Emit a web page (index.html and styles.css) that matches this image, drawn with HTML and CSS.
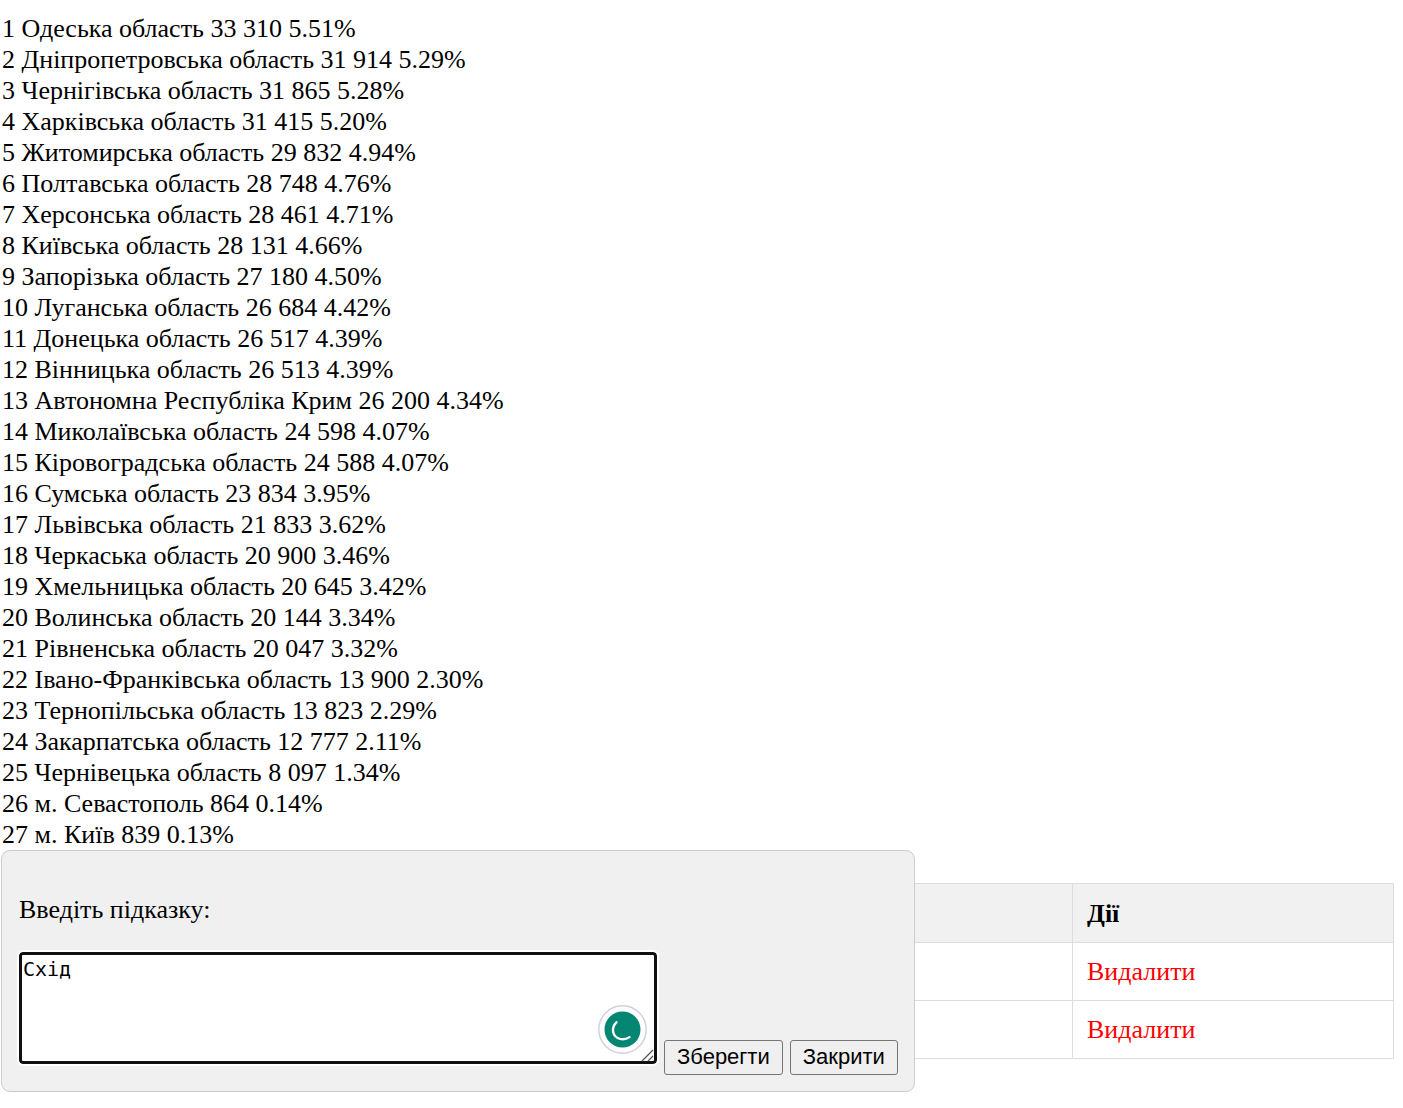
FILE: index.html
```html
<!DOCTYPE html>
<html lang="uk">
<head>
<meta charset="utf-8">
<meta name="viewport" content="width=device-width, initial-scale=1">
<title>Області</title>
<link rel="stylesheet" href="styles.css">
</head>
<body>
<main>
  <ul class="regions">
    <li>1 Одеська область 33 310 5.51%</li>
    <li>2 Дніпропетровська область 31 914 5.29%</li>
    <li>3 Чернігівська область 31 865 5.28%</li>
    <li>4 Харківська область 31 415 5.20%</li>
    <li>5 Житомирська область 29 832 4.94%</li>
    <li>6 Полтавська область 28 748 4.76%</li>
    <li>7 Херсонська область 28 461 4.71%</li>
    <li>8 Київська область 28 131 4.66%</li>
    <li>9 Запорізька область 27 180 4.50%</li>
    <li>10 Луганська область 26 684 4.42%</li>
    <li>11 Донецька область 26 517 4.39%</li>
    <li>12 Вінницька область 26 513 4.39%</li>
    <li>13 Автономна Республіка Крим 26 200 4.34%</li>
    <li>14 Миколаївська область 24 598 4.07%</li>
    <li>15 Кіровоградська область 24 588 4.07%</li>
    <li>16 Сумська область 23 834 3.95%</li>
    <li>17 Львівська область 21 833 3.62%</li>
    <li>18 Черкаська область 20 900 3.46%</li>
    <li>19 Хмельницька область 20 645 3.42%</li>
    <li>20 Волинська область 20 144 3.34%</li>
    <li>21 Рівненська область 20 047 3.32%</li>
    <li>22 Івано-Франківська область 13 900 2.30%</li>
    <li>23 Тернопільська область 13 823 2.29%</li>
    <li>24 Закарпатська область 12 777 2.11%</li>
    <li>25 Чернівецька область 8 097 1.34%</li>
    <li>26 м. Севастополь 864 0.14%</li>
    <li>27 м. Київ 839 0.13%</li>
  </ul>

  <section class="hints">
    <table class="hints-table">
      <thead>
        <tr><th></th><th class="actions">Дії</th></tr>
      </thead>
      <tbody>
        <tr><td></td><td><a class="delete" href="#">Видалити</a></td></tr>
        <tr><td></td><td><a class="delete" href="#">Видалити</a></td></tr>
      </tbody>
    </table>

    <form class="popup">
      <label class="popup-label" for="hint">Введіть підказку:</label>
      <div class="popup-row">
        <div class="field">
          <textarea id="hint" class="hint-input" spellcheck="false">Схід</textarea>
          <svg class="checker" viewBox="0 0 49 49" aria-hidden="true">
            <circle cx="24.5" cy="24.5" r="23.7" fill="#fff" stroke="#d0d2e0" stroke-width="1.5"/>
            <circle cx="24.5" cy="24.5" r="18" fill="#058672"/>
            <path d="M18.6 17.2C12.6 23 14.2 32.2 22.3 34C25.6 34.7 28.8 33.9 31.5 32.1" fill="none" stroke="#fff" stroke-width="2.3" stroke-linecap="round"/>
          </svg>
          <svg class="grip" viewBox="0 0 13 13" aria-hidden="true">
            <path d="M1 12L12 1M7 12L12 7" fill="none" stroke="#555" stroke-width="1.3"/>
          </svg>
        </div>
        <button class="button" type="button">Зберегти</button>
        <button class="button" type="button">Закрити</button>
      </div>
    </form>
  </section>
</main>
</body>
</html>
```
FILE: styles.css
```css
* {
  box-sizing: border-box;
}

body {
  margin: 0;
  padding-top: 13px;
  background: #fff;
  color: #000;
  font: 26px/31px "Liberation Serif", "Times New Roman", serif;
}

.regions {
  margin: 0;
  padding: 0 2px;
  list-style: none;
}

.hints {
  position: relative;
  min-height: 242px;
  padding: 33px 9px 0 14px;
}

.hints-table {
  width: 100%;
  border-collapse: collapse;
  table-layout: fixed;
}

.hints-table th,
.hints-table td {
  height: 58px;
  padding: 13px 14px;
  border: 1px solid #ddd;
  text-align: left;
}

.hints-table th {
  height: 59px;
  background: #f1f1f1;
}

.hints-table .actions {
  width: 321px;
}

.delete {
  color: #f00;
  text-decoration: none;
}

.popup {
  position: absolute;
  top: 0;
  left: 1px;
  padding: 16px 16px 16px 17px;
  border: 1px solid #ccc;
  border-radius: 9px;
  background: #f0f0f0;
}

.popup-label {
  display: block;
  margin: 27px 0;
}

.popup-row {
  display: flex;
  align-items: flex-end;
  gap: 7px;
}

.field {
  position: relative;
  margin-bottom: 11px;
}

.hint-input {
  display: block;
  width: 638px;
  height: 112px;
  padding: 2px 1px;
  border: 3px solid #101010;
  border-radius: 4px;
  outline: 2px solid #fff;
  background: #fff;
  color: #000;
  font: 20px/24px "DejaVu Sans Mono", monospace;
  resize: none;
}

.checker {
  position: absolute;
  right: 10px;
  bottom: 10px;
  width: 49px;
  height: 49px;
}

.grip {
  position: absolute;
  right: 3px;
  bottom: 2px;
  width: 13px;
  height: 13px;
}

.button {
  height: 35px;
  padding: 0 12px 2px;
  border: 1px solid #767676;
  border-radius: 3px;
  background: #efefef;
  color: #000;
  font: 22px/31px "Liberation Sans", Arial, sans-serif;
}
```
